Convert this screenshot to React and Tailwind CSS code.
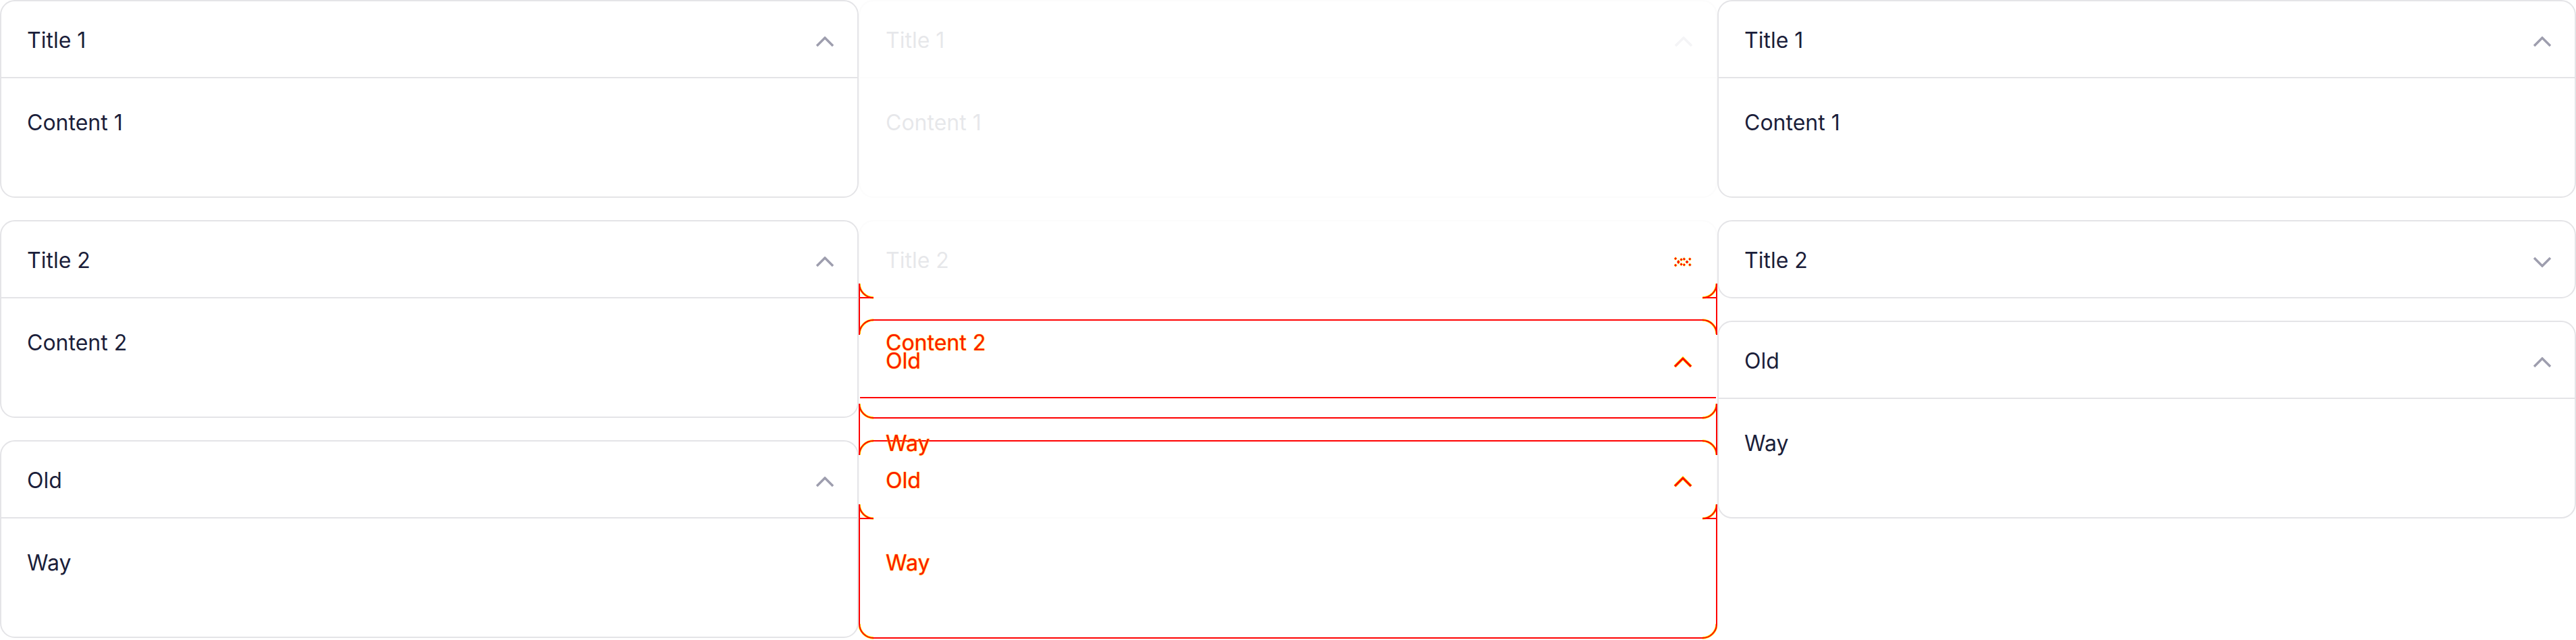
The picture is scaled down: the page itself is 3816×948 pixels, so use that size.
const items = [
  { title: 'Title 1', content: 'Content 1' },
  { title: 'Title 2', content: 'Content 2' },
  { title: 'Old', content: 'Way' },
]

function Chevron({ up = true, className = '' }) {
  return (
    <svg width="28" height="16" viewBox="0 0 28 16" fill="none" className={className}>
      <polyline
        points={up ? '2,14 14,2 26,14' : '2,2 14,14 26,2'}
        stroke="currentColor"
        strokeWidth="3.5"
      />
    </svg>
  )
}

function Item({ title, content, open }) {
  return (
    <div className="border-2 border-[#e4e4e7] rounded-[22px] bg-white overflow-hidden">
      <div
        className={`flex items-center justify-between pl-[38px] pr-[34px] ${
          open ? 'h-[114px] border-b-2 border-[#e4e4e7]' : 'h-[112px]'
        }`}
      >
        <span className="pt-1">{title}</span>
        <Chevron up={open} className="mt-2 text-[#9e9eae]" />
      </div>
      {open && <div className="h-[175px] pt-[42px] pl-[38px]">{content}</div>}
    </div>
  )
}

function Column({ openState }) {
  return (
    <div className="flex flex-col gap-[33px]">
      {items.map((it, i) => (
        <Item key={i} title={it.title} content={it.content} open={openState[i]} />
      ))}
    </div>
  )
}

// red diff outlines in the middle column (column-relative coords)
const lines = [
  'M1 420 V496', 'M1271 420 V496',
  'M1 441 H22', 'M1250 441 H1271',
  'M22 474 H1250',
  'M2 589 H1270',
  'M1 598 V674', 'M1271 598 V674',
  'M22 619 H1250', 'M22 653 H1250',
  'M1 747 V924', 'M1271 747 V924',
  'M1 768 H22', 'M1250 768 H1271',
  'M22 945 H1250',
]

const arcs = [
  'M1 420 A21 21 0 0 0 22 441', 'M1271 420 A21 21 0 0 1 1250 441',
  'M22 474 A21 21 0 0 0 1 495', 'M1250 474 A21 21 0 0 1 1271 495',
  'M1 598 A21 21 0 0 0 22 619', 'M1271 598 A21 21 0 0 1 1250 619',
  'M22 653 A21 21 0 0 0 1 674', 'M1250 653 A21 21 0 0 1 1271 674',
  'M1 747 A21 21 0 0 0 22 768', 'M1271 747 A21 21 0 0 1 1250 768',
  'M1 924 A21 21 0 0 0 22 945', 'M1271 924 A21 21 0 0 1 1250 945',
]

const redTexts = [
  { text: 'Content 2', top: 484 },
  { text: 'Old', top: 511 },
  { text: 'Way', top: 633 },
  { text: 'Old', top: 688 },
  { text: 'Way', top: 810 },
]

function DiffOverlay() {
  return (
    <div className="absolute inset-0 pointer-events-none">
      <svg width="1272" height="948" viewBox="0 0 1272 948" fill="none" className="absolute inset-0">
        {arcs.map((d, i) => (
          <path key={'y' + i} d={d} stroke="#ffee00" strokeWidth="3.5" />
        ))}
        {arcs.map((d, i) => (
          <path key={'a' + i} d={d} stroke="#ff0000" strokeWidth="2" />
        ))}
        {lines.map((d, i) => (
          <path key={'l' + i} d={d} stroke="#ff0000" strokeWidth="2" />
        ))}
        {/* dotted up/down chevron */}
        <polyline points="1209,394 1221,382 1233,394" stroke="#ffee00" strokeWidth="4" strokeDasharray="3 3" />
        <polyline points="1209,382 1221,394 1233,382" stroke="#ffee00" strokeWidth="4" strokeDasharray="3 3" />
        <polyline points="1209,394 1221,382 1233,394" stroke="#ff0000" strokeWidth="2.5" strokeDasharray="3 3" />
        <polyline points="1209,382 1221,394 1233,382" stroke="#ff0000" strokeWidth="2.5" strokeDasharray="3 3" />
        {/* chevrons */}
        <polyline points="1209,543 1221,531 1233,543" stroke="#ffee00" strokeWidth="4.5" />
        <polyline points="1209,543 1221,531 1233,543" stroke="#ff0000" strokeWidth="3" />
        <polyline points="1209,720 1221,708 1233,720" stroke="#ffee00" strokeWidth="4.5" />
        <polyline points="1209,720 1221,708 1233,720" stroke="#ff0000" strokeWidth="3" />
      </svg>
      {redTexts.map((t, i) => (
        <span
          key={i}
          className="absolute left-[40px] text-[#ff1a00] [text-shadow:0_0_1.5px_#ffdd00,0_0_1px_#ffdd00]"
          style={{ top: t.top }}
        >
          {t.text}
        </span>
      ))}
    </div>
  )
}

export default function App() {
  return (
    <div className="w-[3816px] h-[948px] bg-white grid grid-cols-3 font-['Inter',sans-serif] text-[32px] leading-[48px] text-[#1b1e3a] overflow-hidden">
      <Column openState={[true, true, true]} />

      <div className="relative">
        <div className="opacity-10">
          <Column openState={[true, true, true]} />
        </div>
        <DiffOverlay />
      </div>

      <Column openState={[true, false, true]} />
    </div>
  )
}
